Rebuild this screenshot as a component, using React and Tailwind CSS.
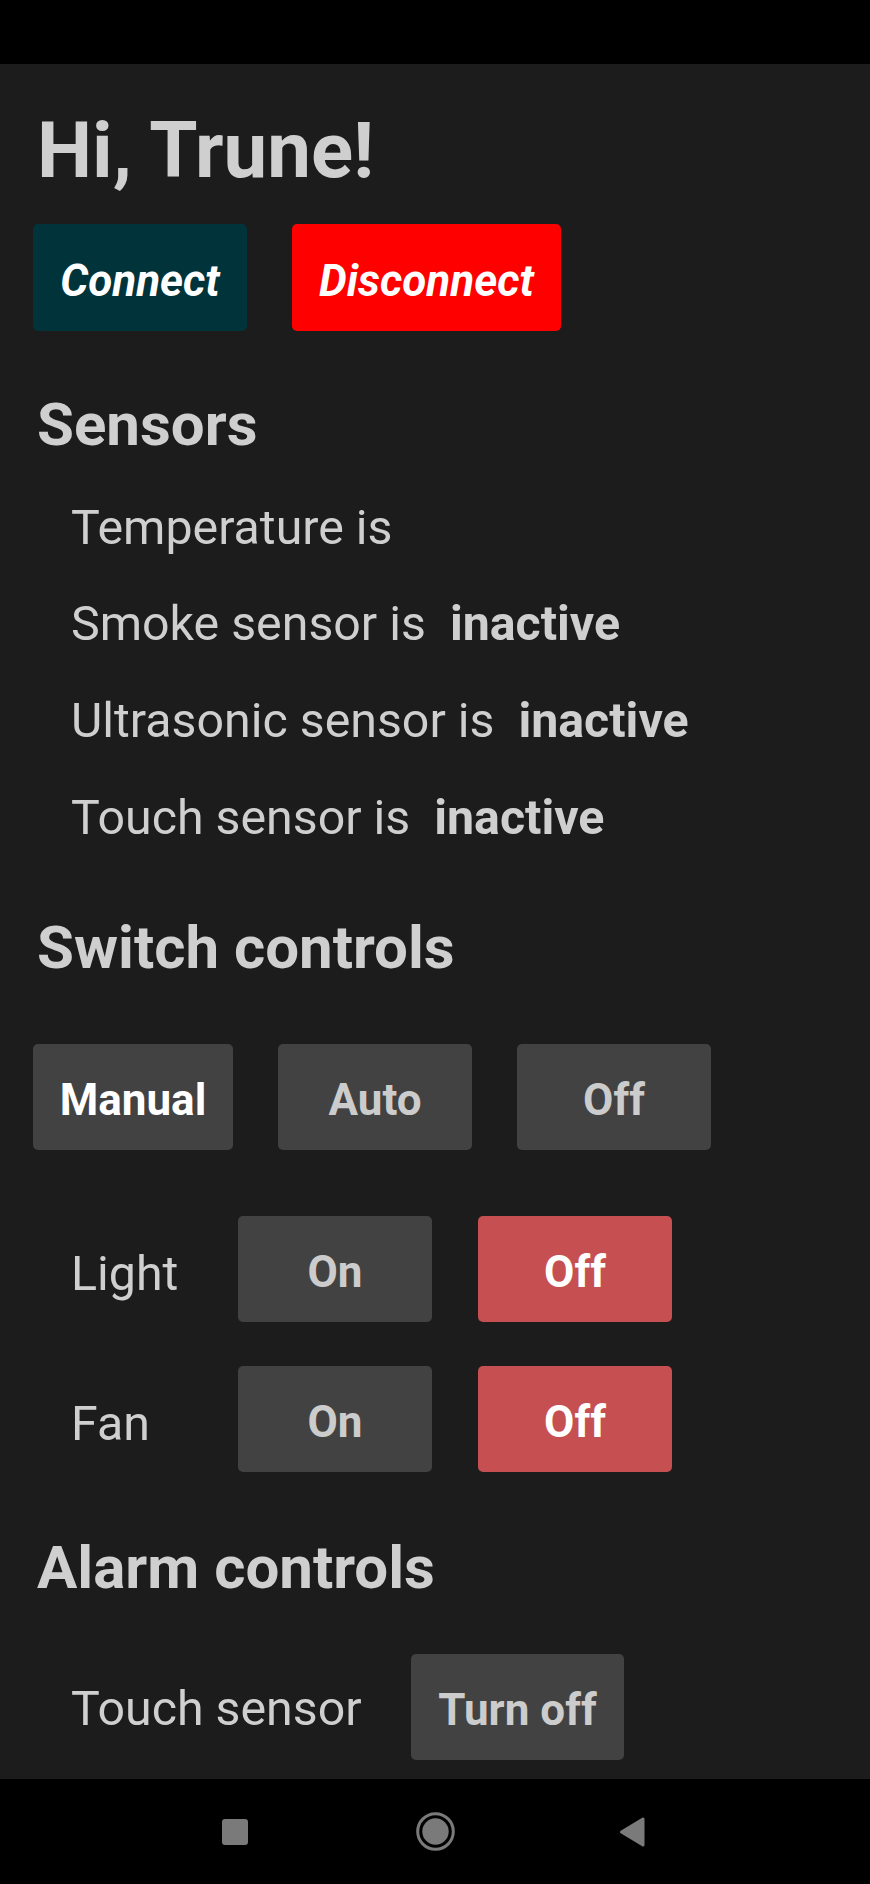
import React, { useState } from 'react';

const grayBtn = 'flex items-center justify-center h-[106px] pt-[5px] rounded-[5px] bg-[#424242] text-[44px] font-bold leading-none';

function NavBar() {
  return (
    <nav className="h-[105px] bg-black flex items-center pl-[222px]">
      <div className="w-[26px] h-[26px] rounded-[3px] bg-[#7a7a7a]" />
      <svg width="39" height="39" viewBox="0 0 39 39" className="ml-[168px]">
        <circle cx="19.5" cy="19.5" r="17.8" fill="none" stroke="#7a7a7a" strokeWidth="3" />
        <circle cx="19.5" cy="19.5" r="13.2" fill="#7a7a7a" />
      </svg>
      <svg width="26" height="32" viewBox="0 0 26 32" className="ml-[164px]">
        <path d="M2.5 16 L24 3 L24 29 Z" fill="#7a7a7a" stroke="#7a7a7a" strokeWidth="3" strokeLinejoin="round" />
      </svg>
    </nav>
  );
}

function SensorLine({ label, state }) {
  return (
    <p className="pl-[38px] text-[48.3px] leading-[96.7px] whitespace-pre text-[#cfcfcf]">
      {label}
      {state && <span className="font-bold">{'  ' + state}</span>}
    </p>
  );
}

function OnOffRow({ label, on, onChange, className }) {
  return (
    <div className={'flex items-center ' + className}>
      <span className="w-[205px] pl-[38px] pt-[10px] text-[48.3px] leading-[56px] text-[#cfcfcf]">{label}</span>
      <div className="flex gap-[46px]">
        <button
          onClick={() => onChange(true)}
          className={grayBtn + ' w-[194px] ' + (on ? 'bg-[#c64f51] text-white' : 'text-[#cccccc]')}
        >
          On
        </button>
        <button
          onClick={() => onChange(false)}
          className={
            'flex items-center justify-center h-[106px] w-[194px] pt-[5px] rounded-[5px] text-[44px] font-bold leading-none ' +
            (!on ? 'bg-[#c64f51] text-white' : 'bg-[#424242] text-[#cccccc]')
          }
        >
          Off
        </button>
      </div>
    </div>
  );
}

export default function App() {
  const [mode, setMode] = useState('Manual');
  const [light, setLight] = useState(false);
  const [fan, setFan] = useState(false);

  return (
    <div className="w-[870px] h-[1884px] flex flex-col bg-black" style={{ fontFamily: 'Roboto, "Noto Sans", sans-serif' }}>
      <div className="h-[64px] bg-black" />
      <main className="h-[1715px] overflow-hidden bg-[#1c1c1c] px-[33px] pt-[42px] text-[#cfcfcf]">
        <h1 className="pl-[4px] text-[78px] leading-[90px] font-bold">Hi, Trune!</h1>

        <div className="flex gap-[45px] mt-[28px]">
          <button className="flex items-center justify-center w-[214px] h-[107px] pt-[6px] rounded-[5px] bg-[#00343a] text-white text-[44px] font-bold italic leading-none">
            Connect
          </button>
          <button className="flex items-center justify-center w-[269px] h-[107px] pt-[6px] rounded-[5px] bg-[#ff0000] text-white text-[44px] font-bold italic leading-none">
            Disconnect
          </button>
        </div>

        <h2 className="mt-[59px] pl-[4px] text-[60px] leading-[70px] font-bold">Sensors</h2>
        <div className="mt-[19.6px]">
          <SensorLine label="Temperature is" />
          <SensorLine label="Smoke sensor is" state="inactive" />
          <SensorLine label="Ultrasonic sensor is" state="inactive" />
          <SensorLine label="Touch sensor is" state="inactive" />
        </div>

        <h2 className="mt-[47px] pl-[4px] text-[60px] leading-[70px] font-bold">Switch controls</h2>
        <div className="flex gap-[45px] mt-[61px]">
          {['Manual', 'Auto', 'Off'].map((m) => (
            <button
              key={m}
              onClick={() => setMode(m)}
              className={grayBtn + (m === 'Manual' ? ' w-[200px]' : ' w-[194px]') + (mode === m ? ' text-white' : ' text-[#cccccc]')}
            >
              {m}
            </button>
          ))}
        </div>

        <OnOffRow label="Light" on={light} onChange={setLight} className="mt-[66px]" />
        <OnOffRow label="Fan" on={fan} onChange={setFan} className="mt-[44px]" />

        <h2 className="mt-[61px] pl-[4px] text-[60px] leading-[70px] font-bold">Alarm controls</h2>
        <div className="flex items-center mt-[51px]">
          <span className="w-[378px] pl-[38px] pt-[4px] text-[48.3px] leading-[56px]">Touch sensor</span>
          <button className={grayBtn + ' w-[213px] text-[#cccccc]'}>Turn off</button>
        </div>
      </main>
      <NavBar />
    </div>
  );
}
